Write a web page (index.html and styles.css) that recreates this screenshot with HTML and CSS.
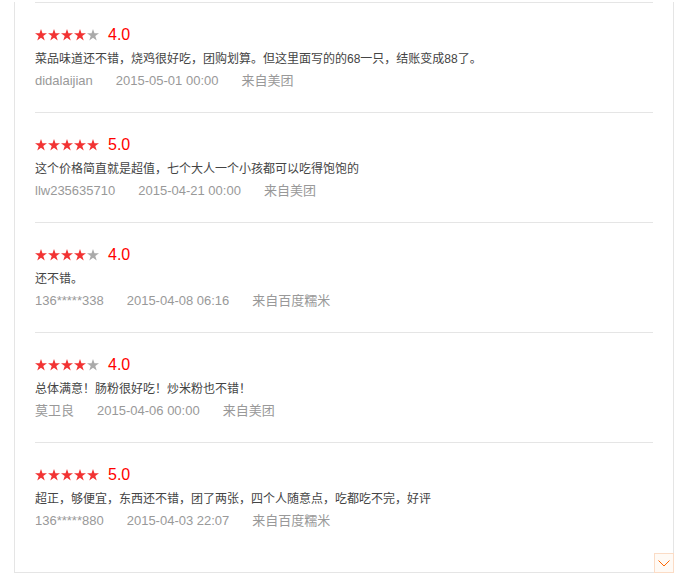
FILE: index.html
```html
<!DOCTYPE html>
<html lang="zh-CN">
<head>
  <meta charset="UTF-8">
  <title>评价</title>
  <link rel="stylesheet" href="styles.css">
</head>
<body>
  <div class="comments">

    <div class="item">
      <div class="rate">
        <span class="stars"><i class="on"></i><i class="on"></i><i class="on"></i><i class="on"></i><i></i></span>
        <span class="score">4.0</span>
      </div>
      <p class="text">菜品味道还不错，烧鸡很好吃，团购划算。但这里面写的的68一只，结账变成88了。</p>
      <div class="meta"><span>didalaijian</span><span>2015-05-01 00:00</span><span>来自美团</span></div>
    </div>

    <div class="item">
      <div class="rate">
        <span class="stars"><i class="on"></i><i class="on"></i><i class="on"></i><i class="on"></i><i class="on"></i></span>
        <span class="score">5.0</span>
      </div>
      <p class="text">这个价格简直就是超值，七个大人一个小孩都可以吃得饱饱的</p>
      <div class="meta"><span>llw235635710</span><span>2015-04-21 00:00</span><span>来自美团</span></div>
    </div>

    <div class="item">
      <div class="rate">
        <span class="stars"><i class="on"></i><i class="on"></i><i class="on"></i><i class="on"></i><i></i></span>
        <span class="score">4.0</span>
      </div>
      <p class="text">还不错。</p>
      <div class="meta"><span>136*****338</span><span>2015-04-08 06:16</span><span>来自百度糯米</span></div>
    </div>

    <div class="item">
      <div class="rate">
        <span class="stars"><i class="on"></i><i class="on"></i><i class="on"></i><i class="on"></i><i></i></span>
        <span class="score">4.0</span>
      </div>
      <p class="text">总体满意！肠粉很好吃！炒米粉也不错！</p>
      <div class="meta"><span>莫卫良</span><span>2015-04-06 00:00</span><span>来自美团</span></div>
    </div>

    <div class="item">
      <div class="rate">
        <span class="stars"><i class="on"></i><i class="on"></i><i class="on"></i><i class="on"></i><i class="on"></i></span>
        <span class="score">5.0</span>
      </div>
      <p class="text">超正，够便宜，东西还不错，团了两张，四个人随意点，吃都吃不完，好评</p>
      <div class="meta"><span>136*****880</span><span>2015-04-03 22:07</span><span>来自百度糯米</span></div>
    </div>

    <a class="more" href="#">
      <svg width="12" height="7" viewBox="0 0 12 7"><polyline points="0.5,0.5 6,6 11.5,0.5" fill="none" stroke="#ff6600" stroke-width="1"/></svg>
    </a>
  </div>
</body>
</html>
```

FILE: styles.css
```css
* {
  box-sizing: border-box;
}
body {
  margin: 0;
  padding-top: 2px;
  background: #fff;
  font-family: 'Liberation Sans', 'Noto Sans CJK SC', sans-serif;
}
.comments {
  position: relative;
  width: 660px;
  margin-left: 14px;
  padding: 0 20px 20px;
  border: 1px solid #e5e5e5;
  border-top: none;
}
.item {
  height: 110px;
  padding-top: 21px;
  border-top: 1px solid #e5e5e5;
}
.rate {
  display: flex;
  align-items: center;
  height: 22px;
}
.stars {
  display: flex;
  gap: 1px;
  margin-right: 9px;
}
.stars i {
  width: 12px;
  height: 12px;
  background: #aaa;
  clip-path: polygon(50% 0%, 62% 36%, 100% 36%, 69% 58%, 81% 95%, 50% 72%, 19% 95%, 31% 58%, 0% 36%, 38% 36%);
}
.stars i.on {
  background: #f23333;
}
.score {
  font-size: 16px;
  color: #f00;
}
.text {
  margin: 2px 0 0;
  font-size: 12px;
  line-height: 22px;
  color: #444;
}
.meta {
  display: flex;
  font-size: 13px;
  line-height: 22px;
  color: #999;
}
.meta span {
  margin-right: 23px;
}
.more {
  position: absolute;
  right: -1px;
  bottom: -1px;
  width: 20px;
  height: 20px;
  display: flex;
  align-items: center;
  justify-content: center;
  border: 1px solid #fbdcc6;
  background: #fffaf5;
}
```
